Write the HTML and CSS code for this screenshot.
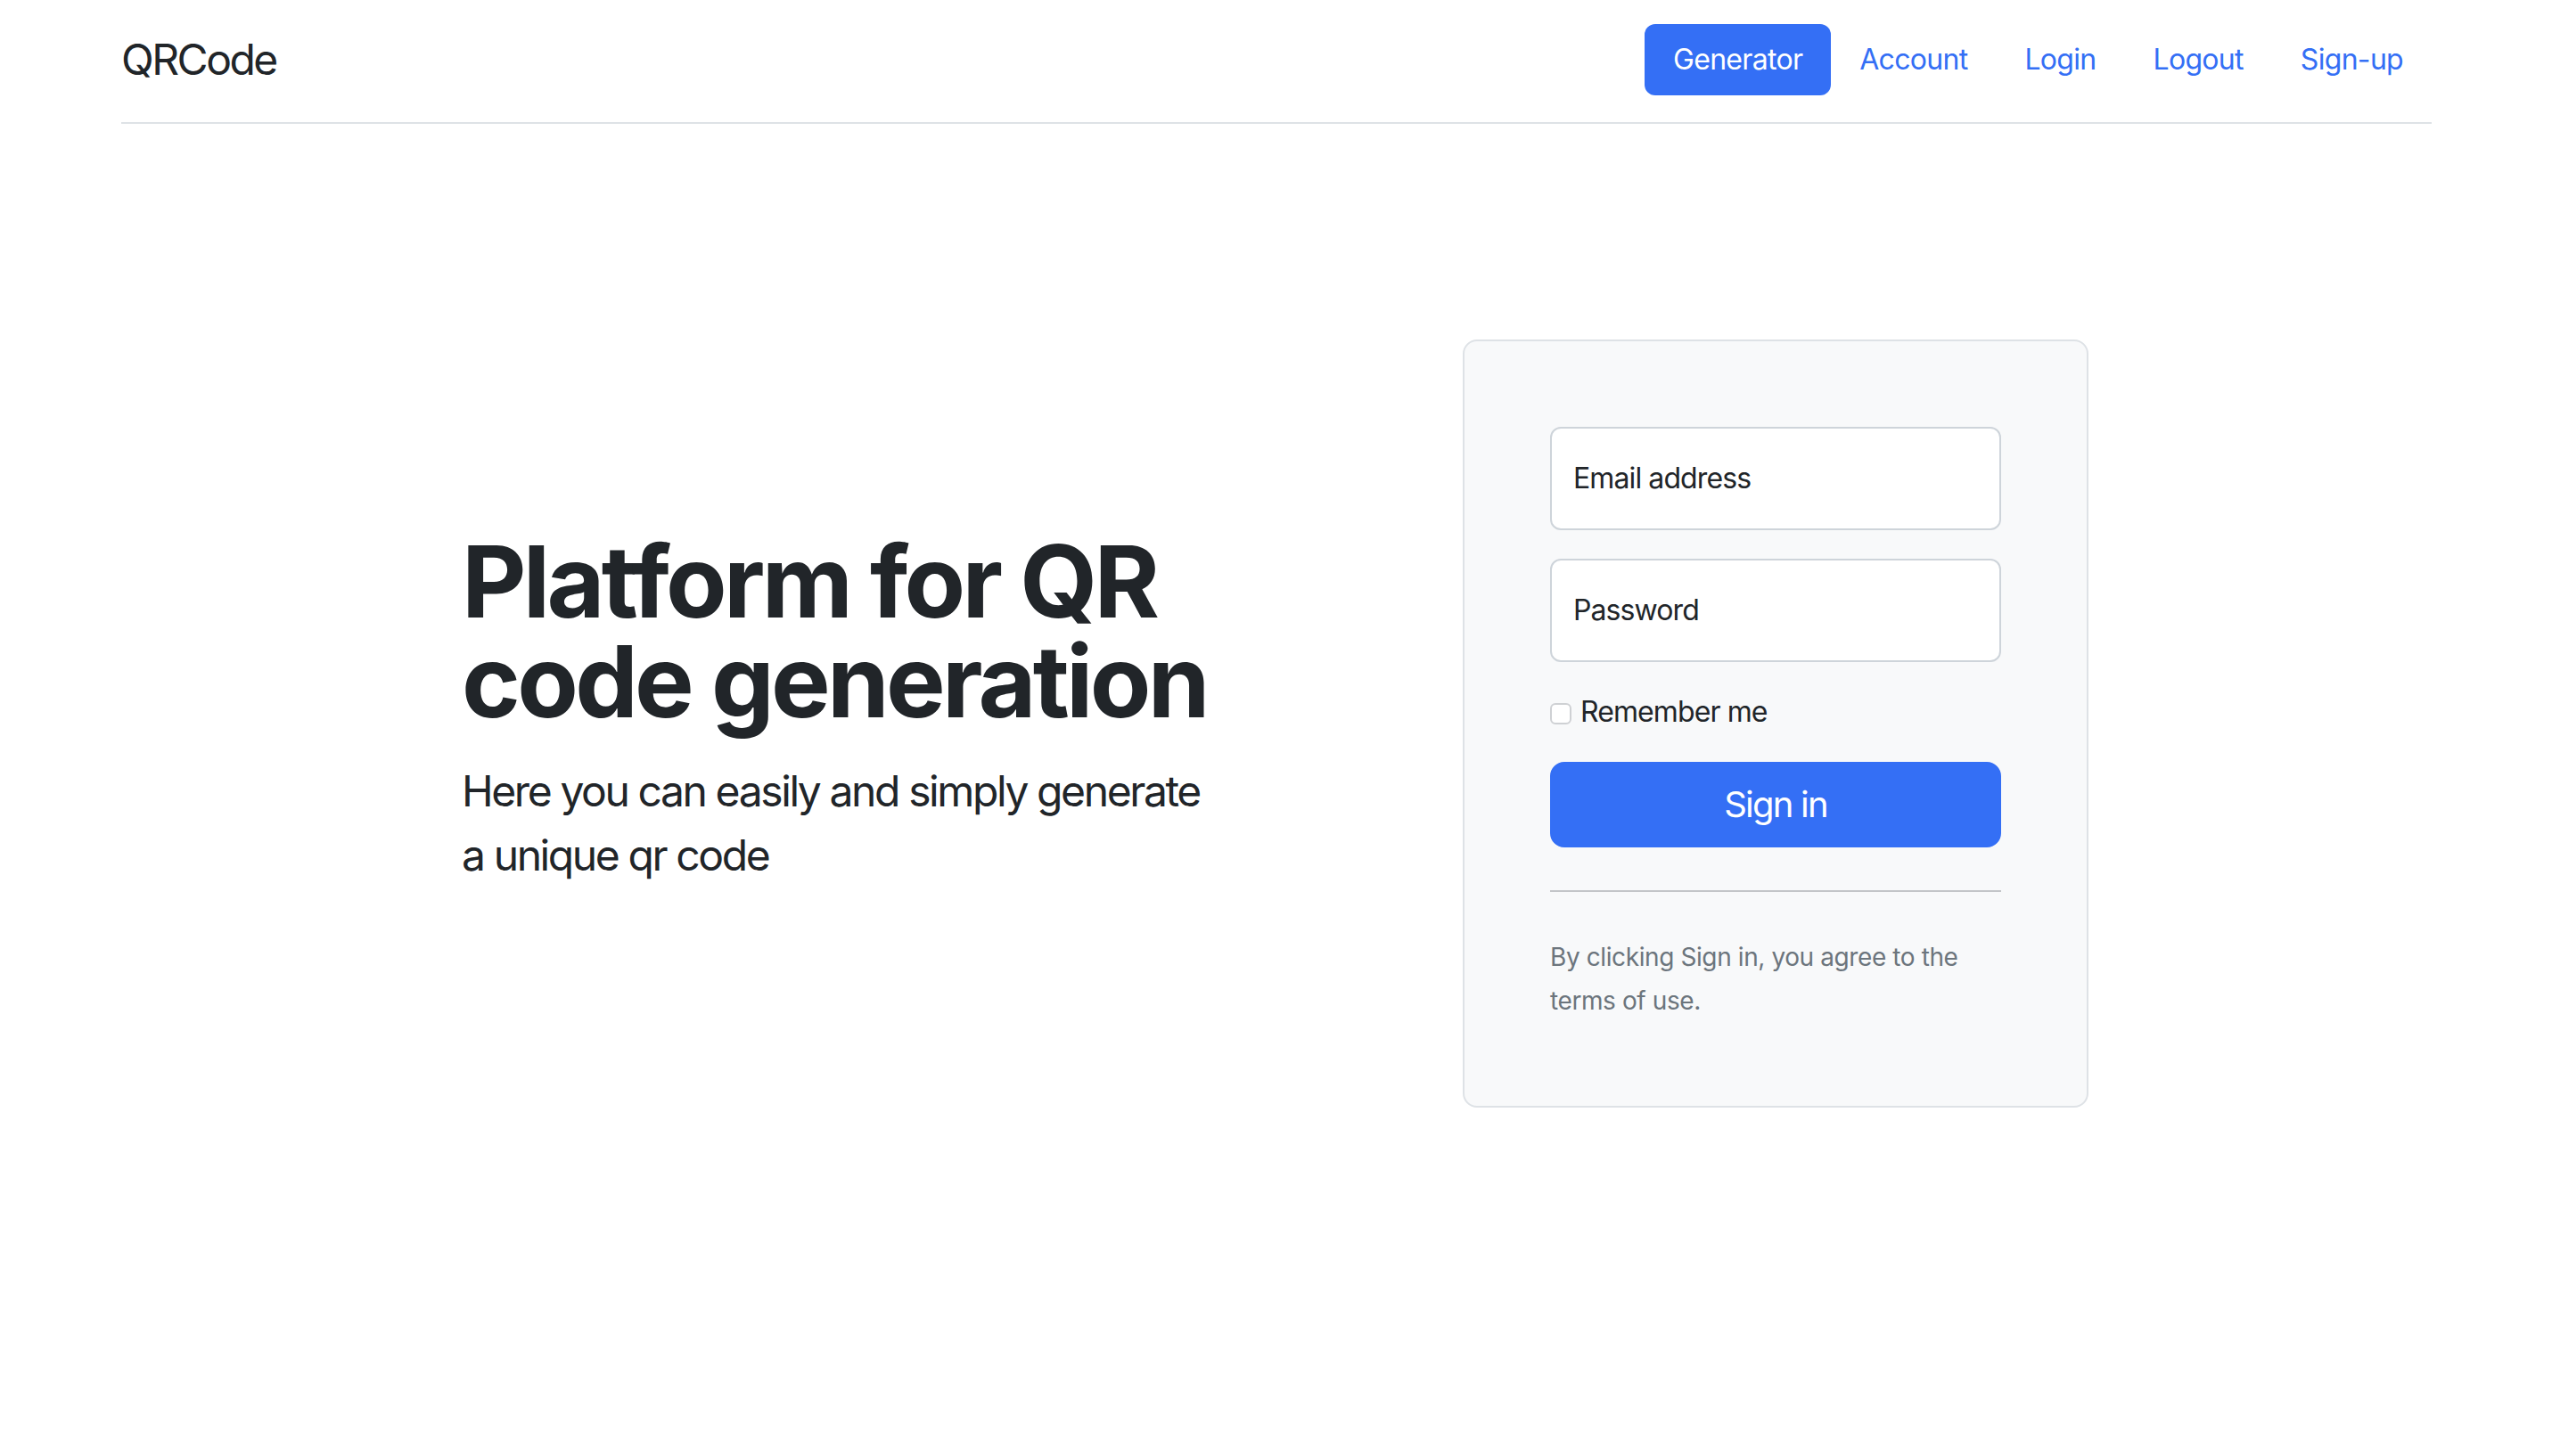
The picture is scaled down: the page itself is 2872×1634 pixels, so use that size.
FILE: index.html
```html
<!DOCTYPE html>
<html lang="en">
<head>
<meta charset="utf-8">
<title>QRCode</title>
<link rel="stylesheet" href="styles.css">
</head>
<body>
<header class="site-header">
  <a href="#" class="brand">QRCode</a>
  <ul class="nav">
    <li><a href="#" class="nav-link active">Generator</a></li>
    <li><a href="#" class="nav-link">Account</a></li>
    <li><a href="#" class="nav-link">Login</a></li>
    <li><a href="#" class="nav-link">Logout</a></li>
    <li><a href="#" class="nav-link">Sign-up</a></li>
  </ul>
</header>
<main class="hero">
  <div class="hero-text">
    <h1 class="hero-title">Platform for QR code generation</h1>
    <p class="hero-lead">Here you can easily and simply generate a unique qr code</p>
  </div>
  <form class="signin-card">
    <div class="field">
      <input type="email" class="field-input" id="email" placeholder=" ">
      <label for="email" class="field-label">Email address</label>
    </div>
    <div class="field">
      <input type="password" class="field-input" id="password" placeholder=" ">
      <label for="password" class="field-label">Password</label>
    </div>
    <div class="remember">
      <label class="remember-label"><input type="checkbox" class="remember-box"> Remember me</label>
    </div>
    <button type="submit" class="btn-signin">Sign in</button>
    <hr class="divider">
    <small class="terms">By clicking Sign in, you agree to the terms of use.</small>
  </form>
</main>
</body>
</html>
```
FILE: styles.css
```css
* { box-sizing: border-box; }
html, body { margin: 0; padding: 0; background: #fff; }
body {
  font-family: Inter, "Noto Sans", "Liberation Sans", sans-serif;
  font-size: 32px;
  line-height: 48px;
  letter-spacing: -0.9px;
  color: #212529;
}
.site-header {
  display: flex;
  align-items: center;
  justify-content: space-between;
  margin: 0 144px 0 136px;
  padding: 27px 0 30px;
  border-bottom: 2px solid #dee2e6;
}
.brand {
  font-size: 48px;
  line-height: 72px;
  letter-spacing: -2.5px;
  color: #212529;
  text-decoration: none;
}
.nav {
  display: flex;
  list-style: none;
  margin: 0;
  padding: 0;
}
.nav-link {
  display: block;
  padding: 16px 32px;
  font-size: 32px;
  line-height: 48px;
  letter-spacing: -0.7px;
  color: #346ff5;
  text-decoration: none;
  border-radius: 12px;
}
.nav-link.active {
  background: #346ff5;
  color: #fff;
}
.hero {
  display: grid;
  grid-template-columns: 1027px 702px;
  column-gap: 96px;
  align-items: center;
  padding: 242px 0 0 518px;
}
.hero-title {
  margin: 0 0 32px;
  font-size: 112px;
  line-height: 112px;
  font-weight: 700;
  letter-spacing: -3.7px;
}
.hero-lead {
  width: 850px;
  margin: 0 0 32px;
  font-size: 48px;
  line-height: 72px;
  letter-spacing: -2.4px;
}
.signin-card {
  padding: 96px 96px 94px;
  background: #f8f9fa;
  border: 2px solid #dee2e6;
  border-radius: 16px;
}
.field {
  position: relative;
  margin-bottom: 32px;
}
.field-input {
  display: block;
  width: 100%;
  height: 116px;
  padding: 32px 24px;
  font: inherit;
  color: #212529;
  background: #fff;
  border: 2px solid #ced4da;
  border-radius: 12px;
  outline: none;
}
.field-label {
  position: absolute;
  top: 0;
  left: 0;
  height: 100%;
  padding: 34px 26px;
  pointer-events: none;
  color: #212529;
}
.remember {
  margin-bottom: 32px;
}
.remember-label {
  display: flex;
  align-items: center;
}
.remember-box {
  appearance: none;
  -webkit-appearance: none;
  width: 24px;
  height: 24px;
  margin: 4px 10px 0 0;
  background: #fff;
  border: 2px solid #cfd1d4;
  border-radius: 6px;
}
.btn-signin {
  display: block;
  width: 100%;
  height: 96px;
  padding: 16px 32px;
  font: inherit;
  font-size: 40px;
  line-height: 60px;
  letter-spacing: -1.8px;
  color: #fff;
  background: #346ff5;
  border: 2px solid #346ff5;
  border-radius: 16px;
}
.divider {
  margin: 48px 0;
  border: 0;
  border-top: 2px solid #c3c5c8;
}
.terms {
  font-size: 28px;
  letter-spacing: -0.4px;
  color: #6c757d;
}
```
